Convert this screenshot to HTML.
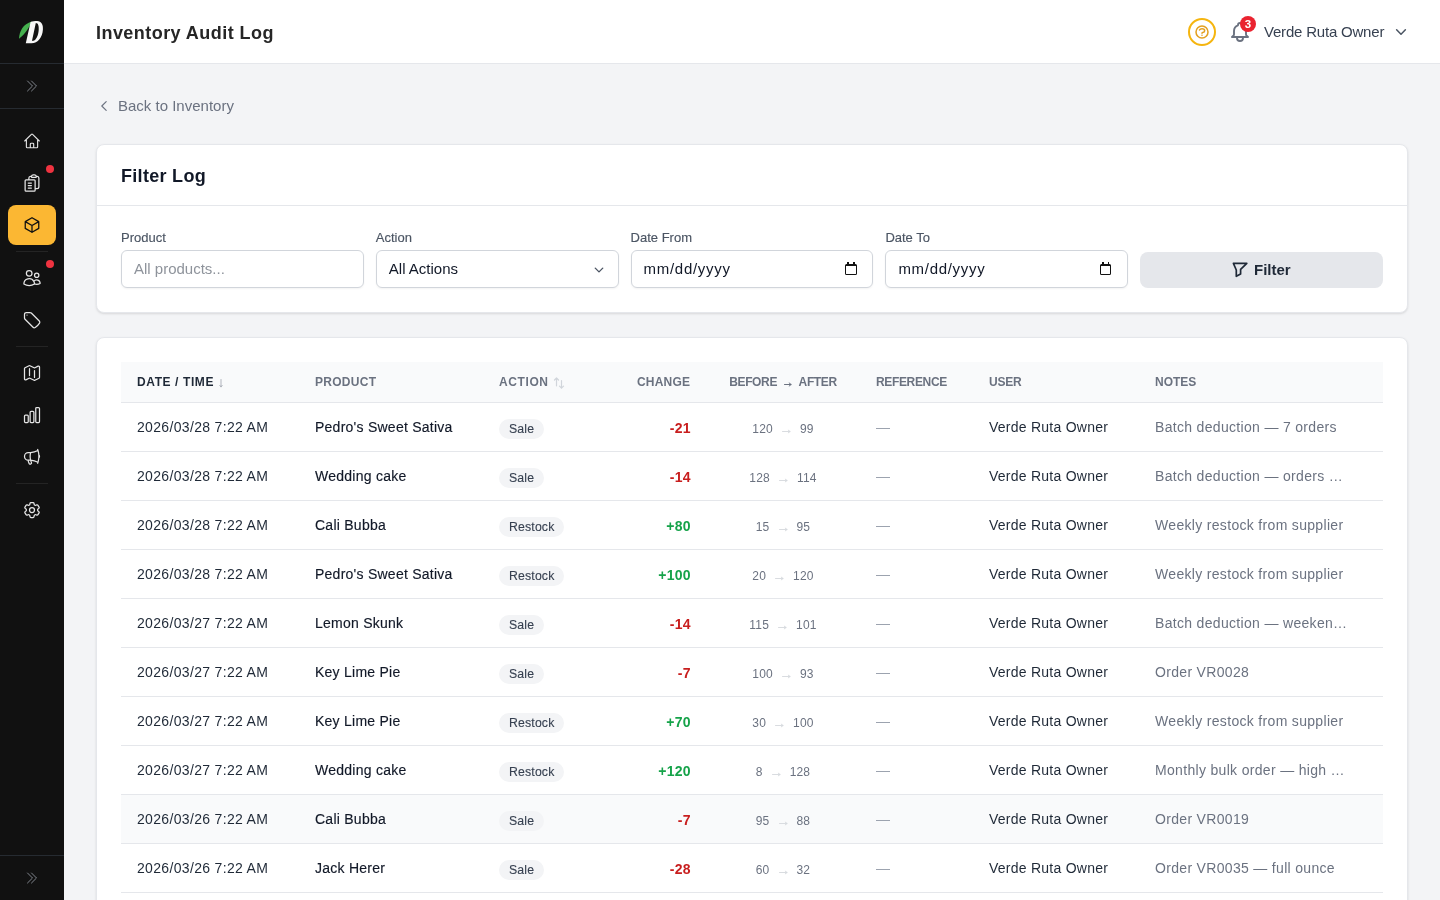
<!DOCTYPE html>
<html><head><meta charset="utf-8">
<style>
*{box-sizing:border-box;margin:0;padding:0}
html,body{width:1440px;height:900px;overflow:hidden;-webkit-font-smoothing:antialiased;background:#f3f4f6;font-family:"Liberation Sans",sans-serif;color:#111827}
.abs{position:absolute}
#side{position:absolute;left:0;top:0;width:64px;height:900px;background:#111111}
#side .dv{position:absolute;left:0;width:64px;height:1px;background:#262b31}
#side .sd{position:absolute;left:16px;width:32px;height:1px;background:#242424}
#side svg.ic{position:absolute;left:22px;width:20px;height:20px;fill:none;stroke:#e5e5e5;stroke-width:1.5;stroke-linecap:round;stroke-linejoin:round}
#side .dot{position:absolute;left:46px;width:8px;height:8px;border-radius:50%;background:#ef3340}
#active{position:absolute;left:8px;top:205px;width:48px;height:40px;border-radius:8px;background:#fbb733}
#hdr{position:absolute;left:64px;top:0;width:1376px;height:64px;background:#fff;border-bottom:1px solid #e5e7eb}
#hdr h1{position:absolute;left:32px;top:21px;font-size:18px;line-height:24px;font-weight:700;color:#262626;letter-spacing:0.45px}
.card{position:absolute;left:96px;width:1312px;background:#fff;border:1px solid #e5e7eb;border-radius:8px;box-shadow:0 1px 3px rgba(0,0,0,0.08),0 1px 2px rgba(0,0,0,0.05)}
.lbl{position:absolute;top:84px;font-size:13px;line-height:18px;color:#4b5563;-webkit-text-stroke:0.15px #4b5563}
.inp{position:absolute;top:105px;width:242.8px;height:38px;border:1px solid #d1d5db;border-radius:6px;box-shadow:0 1px 2px rgba(0,0,0,0.05);font-size:15px;line-height:20px;padding:8px 12px;background:#fff}
.cal{position:absolute;left:213.5px;top:13px;width:11.5px;height:10.5px;border:1.6px solid #111;border-top-width:2.6px;border-radius:1.5px}.cal:before,.cal:after{content:"";position:absolute;top:-4.5px;width:1.8px;height:2.5px;background:#111}.cal:before{left:1px}.cal:after{right:1px}
#tbl{position:absolute;left:24px;top:24px;width:1262px;height:600px}
.th{position:absolute;left:0;width:1262px}
.hc{position:absolute;top:12px;font-size:12px;line-height:16px;font-weight:700;color:#6b7280;letter-spacing:0.6px;white-space:nowrap}
.sa{font-size:10px;color:#9ca3af;margin-left:5px;font-weight:400}
.sb{font-size:10px;color:#d1d5db;margin-left:5px;font-weight:400;letter-spacing:-1px}
.arr{font-size:10px;font-weight:400;color:#9ca3af}
.tr{position:absolute;left:0;width:1262px;height:49px;border-bottom:1px solid #e5e7eb}
.td{position:absolute;top:14px;font-size:14px;line-height:20px;white-space:nowrap;letter-spacing:0.25px}
.dt{color:#1f2937;letter-spacing:0.33px}
.pn{color:#111827;-webkit-text-stroke:0.15px #111827}
.bd{position:absolute;top:16px;height:19.5px;padding:0 10px;border-radius:10px;background:#f3f4f6;font-size:12.3px;line-height:20.5px;color:#374151;letter-spacing:0.15px;-webkit-text-stroke:0.1px #374151}
.ch{font-weight:700;text-align:right;top:15px}
.ba{width:200px;text-align:center;font-size:12px;color:#6b7280;top:16px;letter-spacing:0.2px}
.rar{margin:0 9px;vertical-align:-0.5px}.har{margin:0 7px 0 6.5px;vertical-align:-1px}
.rf{color:#9ca3af}
.us{color:#1f2937}
.nt{color:#6b7280;letter-spacing:0.32px}
</style></head>
<body><div id="root" style="position:absolute;left:0;top:0;width:1440px;height:900px;will-change:transform">
<div id="side">
  <svg class="abs" style="left:0;top:0" width="64" height="64" viewBox="0 0 64 64">
    <path d="M19 38.8 C19.3 31 23 24 31.8 21.4 C29.5 27 25.5 33.5 19 38.8Z" fill="#45b04e"/>
    <path d="M25.8 43.2 L30.6 22 C32.5 21.3 34.5 21 37.2 21 C41.3 21 43.3 24.6 42.9 29.5 C42.4 37.5 38 43.2 31.5 43.2 Z M35.8 23.1 L32 40.8 C32.4 40.9 32.8 40.9 33.2 40.8 C36.2 40.3 38.3 35.5 38.7 30 C39 25.8 38.2 23.2 35.8 23.1 Z" fill="#f7f7f7" fill-rule="evenodd"/>
  </svg>
  <div class="dv" style="top:63px"></div>
  <svg class="abs" style="left:24px;top:78px" width="16" height="16" viewBox="0 0 24 24" fill="none" stroke="#80858d" stroke-width="1.5" stroke-linecap="round" stroke-linejoin="round"><path d="m5.25 4.5 7.5 7.5-7.5 7.5m6-15 7.5 7.5-7.5 7.5"/></svg>
  <div class="dv" style="top:108px"></div>

  <svg class="ic" style="top:132px;left:23px;width:18px;height:18px" viewBox="0 0 24 24"><path d="m2.25 12 8.954-8.955c.44-.439 1.152-.439 1.591 0L21.75 12M4.5 9.75v10.125c0 .621.504 1.125 1.125 1.125H9.75v-4.875c0-.621.504-1.125 1.125-1.125h2.25c.621 0 1.125.504 1.125 1.125V21h4.125c.621 0 1.125-.504 1.125-1.125V9.75M8.25 21h8.25"/></svg>
  <svg class="ic" style="top:173px" viewBox="0 0 24 24"><path d="M7.5 12h3.75M7.5 15h3.75M7.5 18h3.75M15.75 18.75H18a2.250 2.250 0 0 0 2.25-2.25V6.108c0-1.135-.845-2.098-1.976-2.192a48.424 48.424 0 0 0-1.123-.08m-5.801 0c-.065.21-.1.433-.1.664 0 .414.336.75.75.75h4.5a.75.75 0 0 0 .75-.75 2.25 2.25 0 0 0-.1-.664m-5.8 0A2.251 2.251 0 0 1 13.5 2.25H15c1.012 0 1.867.668 2.15 1.586m-5.8 0c-.376.023-.75.05-1.124.08C9.095 4.01 8.25 4.973 8.25 6.108V8.25m0 0H4.875c-.621 0-1.125.504-1.125 1.125v11.25c0 .621.504 1.125 1.125 1.125h9.75c.621 0 1.125-.504 1.125-1.125V9.375c0-.621-.504-1.125-1.125-1.125H8.25Z"/></svg>
  <div class="dot" style="top:165px"></div>

  <div id="active"></div>
  <svg class="ic" style="top:216px;left:23px;width:18px;height:18px;stroke:#111;stroke-width:1.7" viewBox="0 0 24 24"><path d="m21 7.5-9-5.25L3 7.5m18 0-9 5.25m9-5.25v9l-9 5.25M3 7.5l9 5.25M3 7.5v9l9 5.25m0-9v9"/></svg>
  <div class="sd" style="top:251px"></div>

  <svg class="ic" style="top:268px" viewBox="0 0 24 24"><path d="M15 19.128a9.38 9.38 0 0 0 2.625.372 9.337 9.337 0 0 0 4.121-.952 4.125 4.125 0 0 0-7.533-2.493M15 19.128v-.003c0-1.113-.285-2.16-.786-3.07M15 19.128v.106A12.318 12.318 0 0 1 8.624 21c-2.331 0-4.512-.645-6.374-1.766l-.001-.109a6.375 6.375 0 0 1 11.964-3.07M12 6.375a3.375 3.375 0 1 1-6.75 0 3.375 3.375 0 0 1 6.750 0Zm8.25 2.25a2.625 2.625 0 1 1-5.25 0 2.625 2.625 0 0 1 5.25 0Z"/></svg>
  <div class="dot" style="top:260px"></div>
  <svg class="ic" style="top:310px" viewBox="0 0 24 24"><path d="M9.568 3H5.25A2.25 2.25 0 0 0 3 5.25v4.318c0 .597.237 1.17.659 1.591l9.581 9.581c.699.699 1.78.872 2.607.33a18.095 18.095 0 0 0 5.223-5.223c.542-.827.369-1.908-.33-2.607L11.16 3.66A2.25 2.25 0 0 0 9.568 3Z"/><path d="M6 6h.008v.008H6V6Z"/></svg>
  <div class="sd" style="top:346px"></div>

  <svg class="ic" style="top:363px" viewBox="0 0 24 24"><path d="M9 6.75V15m6-6v8.25m.503 3.498 4.875-2.437c.381-.19.622-.58.622-1.006V4.82c0-.836-.88-1.38-1.628-1.006l-3.869 1.934c-.317.159-.69.159-1.006 0L9.503 3.252a1.125 1.125 0 0 0-1.006 0L3.622 5.689C3.24 5.88 3 6.27 3 6.695V19.18c0 .836.88 1.38 1.628 1.006l3.869-1.934c.317-.159.69-.159 1.006 0l4.994 2.497c.317.158.69.158 1.006 0Z"/></svg>
  <svg class="ic" style="top:405px" viewBox="0 0 24 24"><path d="M3 13.125C3 12.504 3.504 12 4.125 12h2.25c.621 0 1.125.504 1.125 1.125v6.75C7.5 20.496 6.996 21 6.375 21h-2.25A1.125 1.125 0 0 1 3 19.875v-6.75ZM9.75 8.625c0-.621.504-1.125 1.125-1.125h2.25c.621 0 1.125.504 1.125 1.125v11.25c0 .621-.504 1.125-1.125 1.125h-2.25a1.125 1.125 0 0 1-1.125-1.125V8.625ZM16.5 4.125c0-.621.504-1.125 1.125-1.125h2.25C20.496 3 21 3.504 21 4.125v15.75c0 .621-.504 1.125-1.125 1.125h-2.25a1.125 1.125 0 0 1-1.125-1.125V4.125Z"/></svg>
  <svg class="ic" style="top:447px" viewBox="0 0 24 24"><path d="M10.34 15.84c-.688-.06-1.386-.09-2.09-.09H7.5a4.5 4.5 0 1 1 0-9h.75c.704 0 1.402-.03 2.090-.09m0 9.180c.253.962.584 1.892.985 2.783.247.55.06 1.21-.463 1.511l-.657.38c-.551.318-1.26.117-1.527-.461a20.845 20.845 0 0 1-1.44-4.282m3.102.069a18.03 18.03 0 0 1-.59-4.59c0-1.586.205-3.124.59-4.59m0 9.18a23.848 23.848 0 0 1 8.835 2.535M10.34 6.66a23.847 23.847 0 0 0 8.835-2.535m0 0A23.74 23.74 0 0 0 18.795 3m.38 1.125a23.91 23.91 0 0 1 1.014 5.395m-1.014 8.855c-.118.38-.245.754-.38 1.125m.38-1.125a23.910 23.910 0 0 0 1.014-5.395m0-3.46c.495.413.811 1.035.811 1.73 0 .695-.316 1.317-.811 1.73m0-3.46a24.347 24.347 0 0 1 0 3.46"/></svg>
  <div class="sd" style="top:483px"></div>

  <svg class="ic" style="top:500px" viewBox="0 0 24 24"><path d="M9.594 3.94c.09-.542.56-.94 1.11-.94h2.593c.55 0 1.02.398 1.11.94l.213 1.281c.063.374.313.686.645.87.074.04.147.083.22.127.325.196.72.257 1.075.124l1.217-.456a1.125 1.125 0 0 1 1.37.49l1.296 2.247a1.125 1.125 0 0 1-.26 1.431l-1.003.827c-.293.241-.438.613-.43.992a7.723 7.723 0 0 1 0 .255c-.008.378.137.75.43.991l1.004.827c.424.35.534.955.26 1.43l-1.298 2.247a1.125 1.125 0 0 1-1.369.491l-1.217-.456c-.355-.133-.75-.072-1.076.124a6.47 6.47 0 0 1-.22.128c-.331.183-.581.495-.644.869l-.213 1.281c-.09.543-.56.94-1.11.94h-2.594c-.55 0-1.019-.398-1.11-.94l-.213-1.281c-.062-.374-.312-.686-.644-.87a6.52 6.52 0 0 1-.22-.127c-.325-.196-.72-.257-1.076-.124l-1.217.456a1.125 1.125 0 0 1-1.369-.49l-1.297-2.247a1.125 1.125 0 0 1 .26-1.431l1.004-.827c.292-.24.437-.613.43-.991a6.932 6.932 0 0 1 0-.255c.007-.38-.138-.751-.43-.992l-1.004-.827a1.125 1.125 0 0 1-.26-1.43l1.297-2.247a1.125 1.125 0 0 1 1.37-.491l1.216.456c.356.133.751.072 1.076-.124.072-.044.146-.086.22-.128.332-.183.582-.495.644-.869l.214-1.28Z"/><path d="M15 12a3 3 0 1 1-6 0 3 3 0 0 1 6 0Z"/></svg>

  <div class="dv" style="top:855px"></div>
  <svg class="abs" style="left:24px;top:870px" width="16" height="16" viewBox="0 0 24 24" fill="none" stroke="#80858d" stroke-width="1.5" stroke-linecap="round" stroke-linejoin="round"><path d="m5.25 4.5 7.5 7.5-7.5 7.5m6-15 7.5 7.5-7.5 7.5"/></svg>
</div>
<div id="hdr">
  <h1>Inventory Audit Log</h1>
  <div class="abs" style="left:1124px;top:18px;width:28px;height:28px;border-radius:50%;border:2px solid #f5b50f"></div>
  <svg class="abs" style="left:1130px;top:24px" width="16" height="16" viewBox="0 0 24 24" fill="none" stroke="#e3a020" stroke-width="2.3" stroke-linecap="round" stroke-linejoin="round"><path d="M8.228 9c.549-1.165 2.03-2 3.772-2 2.21 0 4 1.343 4 3 0 1.4-1.278 2.575-3.006 2.907-.542.104-.994.54-.994 1.093m0 3h.01M21 12a9 9 0 11-18 0 9 9 0 0118 0z"/></svg>
  <svg class="abs" style="left:1164px;top:20px" width="24" height="24" viewBox="0 0 24 24" fill="none" stroke="#6b7280" stroke-width="1.9" stroke-linecap="round" stroke-linejoin="round"><path d="M15 17h5l-1.405-1.405A2.032 2.032 0 0118 14.158V11a6.002 6.002 0 00-4-5.659V5a2 2 0 10-4 0v.341C7.67 6.165 6 8.388 6 11v3.159c0 .538-.214 1.055-.595 1.436L4 17h5m6 0v1a3 3 0 11-6 0v-1m6 0H9"/></svg>
  <div class="abs" style="left:1176px;top:16px;width:16px;height:16px;border-radius:50%;background:#ea2330;color:#fff;font-size:11.5px;font-weight:700;line-height:16px;text-align:center">3</div>
  <div class="abs" style="left:1200px;top:22px;font-size:15px;line-height:20px;color:#374151;letter-spacing:-0.2px">Verde Ruta Owner</div>
  <svg class="abs" style="left:1330px;top:25px" width="14" height="14" viewBox="0 0 24 24" fill="none" stroke="#4b5563" stroke-width="2.6" stroke-linecap="round" stroke-linejoin="round"><path d="m19.5 8.25-7.5 7.5-7.5-7.5"/></svg>
</div>

<svg class="abs" style="left:97px;top:99px" width="14" height="14" viewBox="0 0 24 24" fill="none" stroke="#6b7280" stroke-width="2" stroke-linecap="round" stroke-linejoin="round"><path d="M15.75 19.5 8.25 12l7.5-7.5"/></svg>
<div class="abs" style="left:118px;top:96px;font-size:15px;line-height:20px;color:#6b7280">Back to Inventory</div>

<div class="card" style="top:144px;height:169px">
  <div class="abs" style="left:24px;top:19px;font-size:18px;line-height:24px;font-weight:700;color:#111827;letter-spacing:0.3px">Filter Log</div>
  <div class="abs" style="left:0;top:60px;width:1310px;height:1px;background:#e5e7eb"></div>
  <div class="lbl" style="left:24px">Product</div>
  <div class="inp" style="left:24px"><span style="color:#8e939b">All products...</span></div>
  <div class="lbl" style="left:278.8px">Action</div>
  <div class="inp" style="left:278.8px"><span style="color:#111827">All Actions</span>
    <svg class="abs" style="left:216px;top:13px" width="12" height="12" viewBox="0 0 24 24" fill="none" stroke="#4b5563" stroke-width="2.8" stroke-linecap="round" stroke-linejoin="round"><path d="m19.5 8.25-7.5 7.5-7.5-7.5"/></svg></div>
  <div class="lbl" style="left:533.6px">Date From</div>
  <div class="inp" style="left:533.6px"><span style="color:#111827;letter-spacing:0.7px">mm/dd/yyyy</span><div class="cal"></div></div>
  <div class="lbl" style="left:788.4px">Date To</div>
  <div class="inp" style="left:788.4px"><span style="color:#111827;letter-spacing:0.7px">mm/dd/yyyy</span><div class="cal"></div></div>
  <div class="abs" style="left:1043.2px;top:107px;width:242.8px;height:36px;border-radius:8px;background:#e5e7eb"></div>
  <svg class="abs" style="left:1134px;top:116px" width="18" height="18" viewBox="0 0 18 18" fill="none" stroke="#1f2937" stroke-width="1.7" stroke-linecap="round" stroke-linejoin="round"><path d="M2.4 2.4H15.8L9.6 8.4V13L5.3 15.3V9Z"/></svg>
  <div class="abs" style="left:1157px;top:115px;font-size:15px;line-height:20px;font-weight:700;color:#1f2937">Filter</div>
</div>

<div class="card" style="top:337px;height:600px">
  <!--TBL--><div id="tbl">
<div class="th" style="top:0;height:41px;background:#f9fafb;border-bottom:1px solid #e5e7eb"></div>
<div class="hc" style="left:16px;color:#1f2937">DATE / TIME</div>
<div class="hc" style="left:194px;letter-spacing:0.28px;">PRODUCT</div>
<div class="hc" style="left:378px;">ACTION</div>
<div class="hc" style="left:0;width:569.2px;text-align:right;letter-spacing:0.2px">CHANGE</div>
<div class="hc" style="left:662px;width:200px;margin-left:-100px;text-align:center;letter-spacing:-0.35px">BEFORE<svg class="har" width="8" height="5" viewBox="0 0 8 5"><path d="M0.5 2.5H7M5.2 1 7.2 2.5 5.2 4" fill="none" stroke="#6b7280" stroke-width="1" stroke-linecap="round" stroke-linejoin="round"/></svg>AFTER</div>
<div class="hc" style="left:755px;letter-spacing:-0.35px;">REFERENCE</div>
<div class="hc" style="left:868px;letter-spacing:-0.2px;">USER</div>
<div class="hc" style="left:1034px;letter-spacing:0px;">NOTES</div>
<svg class="abs" style="left:97px;top:16px" width="6" height="10" viewBox="0 0 6 10"><path d="M3 1.5V8.8M1.8 7.4 3 9 4.2 7.4" fill="none" stroke="#a8adb5" stroke-width="0.9" stroke-linecap="round" stroke-linejoin="round"/></svg>
<svg class="abs" style="left:432px;top:15px" width="12" height="12" viewBox="0 0 12 12"><path d="M3.5 1V8.8M1.5 3 3.5 1 5.5 3M8.5 3.5V11.2M6.5 9.2 8.5 11.2 10.5 9.2" fill="none" stroke="#d1d5db" stroke-width="1.2" stroke-linecap="round" stroke-linejoin="round"/></svg>
<div class="tr" style="top:41px;">
<div class="td dt" style="left:16px">2026/03/28 7:22 AM</div>
<div class="td pn" style="left:194px">Pedro's Sweet Sativa</div>
<div class="bd" style="left:378px">Sale</div>
<div class="td ch" style="left:0;width:569.8px;color:#c81e1e">-21</div>
<div class="td ba" style="left:562px">120<svg class="rar" width="9" height="5" viewBox="0 0 9 5"><path d="M0.5 2.5H8M6.3 1.2 8.2 2.5 6.3 3.8" fill="none" stroke="#d5d8dd" stroke-width="0.9" stroke-linecap="round" stroke-linejoin="round"/></svg>99</div>
<div class="td rf" style="left:755px">—</div>
<div class="td us" style="left:868px">Verde Ruta Owner</div>
<div class="td nt" style="left:1034px">Batch deduction — 7 orders</div>
</div>
<div class="tr" style="top:90px;">
<div class="td dt" style="left:16px">2026/03/28 7:22 AM</div>
<div class="td pn" style="left:194px">Wedding cake</div>
<div class="bd" style="left:378px">Sale</div>
<div class="td ch" style="left:0;width:569.8px;color:#c81e1e">-14</div>
<div class="td ba" style="left:562px">128<svg class="rar" width="9" height="5" viewBox="0 0 9 5"><path d="M0.5 2.5H8M6.3 1.2 8.2 2.5 6.3 3.8" fill="none" stroke="#d5d8dd" stroke-width="0.9" stroke-linecap="round" stroke-linejoin="round"/></svg>114</div>
<div class="td rf" style="left:755px">—</div>
<div class="td us" style="left:868px">Verde Ruta Owner</div>
<div class="td nt" style="left:1034px">Batch deduction — orders …</div>
</div>
<div class="tr" style="top:139px;">
<div class="td dt" style="left:16px">2026/03/28 7:22 AM</div>
<div class="td pn" style="left:194px">Cali Bubba</div>
<div class="bd" style="left:378px">Restock</div>
<div class="td ch" style="left:0;width:569.8px;color:#16a34a">+80</div>
<div class="td ba" style="left:562px">15<svg class="rar" width="9" height="5" viewBox="0 0 9 5"><path d="M0.5 2.5H8M6.3 1.2 8.2 2.5 6.3 3.8" fill="none" stroke="#d5d8dd" stroke-width="0.9" stroke-linecap="round" stroke-linejoin="round"/></svg>95</div>
<div class="td rf" style="left:755px">—</div>
<div class="td us" style="left:868px">Verde Ruta Owner</div>
<div class="td nt" style="left:1034px">Weekly restock from supplier</div>
</div>
<div class="tr" style="top:188px;">
<div class="td dt" style="left:16px">2026/03/28 7:22 AM</div>
<div class="td pn" style="left:194px">Pedro's Sweet Sativa</div>
<div class="bd" style="left:378px">Restock</div>
<div class="td ch" style="left:0;width:569.8px;color:#16a34a">+100</div>
<div class="td ba" style="left:562px">20<svg class="rar" width="9" height="5" viewBox="0 0 9 5"><path d="M0.5 2.5H8M6.3 1.2 8.2 2.5 6.3 3.8" fill="none" stroke="#d5d8dd" stroke-width="0.9" stroke-linecap="round" stroke-linejoin="round"/></svg>120</div>
<div class="td rf" style="left:755px">—</div>
<div class="td us" style="left:868px">Verde Ruta Owner</div>
<div class="td nt" style="left:1034px">Weekly restock from supplier</div>
</div>
<div class="tr" style="top:237px;">
<div class="td dt" style="left:16px">2026/03/27 7:22 AM</div>
<div class="td pn" style="left:194px">Lemon Skunk</div>
<div class="bd" style="left:378px">Sale</div>
<div class="td ch" style="left:0;width:569.8px;color:#c81e1e">-14</div>
<div class="td ba" style="left:562px">115<svg class="rar" width="9" height="5" viewBox="0 0 9 5"><path d="M0.5 2.5H8M6.3 1.2 8.2 2.5 6.3 3.8" fill="none" stroke="#d5d8dd" stroke-width="0.9" stroke-linecap="round" stroke-linejoin="round"/></svg>101</div>
<div class="td rf" style="left:755px">—</div>
<div class="td us" style="left:868px">Verde Ruta Owner</div>
<div class="td nt" style="left:1034px">Batch deduction — weeken…</div>
</div>
<div class="tr" style="top:286px;">
<div class="td dt" style="left:16px">2026/03/27 7:22 AM</div>
<div class="td pn" style="left:194px">Key Lime Pie</div>
<div class="bd" style="left:378px">Sale</div>
<div class="td ch" style="left:0;width:569.8px;color:#c81e1e">-7</div>
<div class="td ba" style="left:562px">100<svg class="rar" width="9" height="5" viewBox="0 0 9 5"><path d="M0.5 2.5H8M6.3 1.2 8.2 2.5 6.3 3.8" fill="none" stroke="#d5d8dd" stroke-width="0.9" stroke-linecap="round" stroke-linejoin="round"/></svg>93</div>
<div class="td rf" style="left:755px">—</div>
<div class="td us" style="left:868px">Verde Ruta Owner</div>
<div class="td nt" style="left:1034px">Order VR0028</div>
</div>
<div class="tr" style="top:335px;">
<div class="td dt" style="left:16px">2026/03/27 7:22 AM</div>
<div class="td pn" style="left:194px">Key Lime Pie</div>
<div class="bd" style="left:378px">Restock</div>
<div class="td ch" style="left:0;width:569.8px;color:#16a34a">+70</div>
<div class="td ba" style="left:562px">30<svg class="rar" width="9" height="5" viewBox="0 0 9 5"><path d="M0.5 2.5H8M6.3 1.2 8.2 2.5 6.3 3.8" fill="none" stroke="#d5d8dd" stroke-width="0.9" stroke-linecap="round" stroke-linejoin="round"/></svg>100</div>
<div class="td rf" style="left:755px">—</div>
<div class="td us" style="left:868px">Verde Ruta Owner</div>
<div class="td nt" style="left:1034px">Weekly restock from supplier</div>
</div>
<div class="tr" style="top:384px;">
<div class="td dt" style="left:16px">2026/03/27 7:22 AM</div>
<div class="td pn" style="left:194px">Wedding cake</div>
<div class="bd" style="left:378px">Restock</div>
<div class="td ch" style="left:0;width:569.8px;color:#16a34a">+120</div>
<div class="td ba" style="left:562px">8<svg class="rar" width="9" height="5" viewBox="0 0 9 5"><path d="M0.5 2.5H8M6.3 1.2 8.2 2.5 6.3 3.8" fill="none" stroke="#d5d8dd" stroke-width="0.9" stroke-linecap="round" stroke-linejoin="round"/></svg>128</div>
<div class="td rf" style="left:755px">—</div>
<div class="td us" style="left:868px">Verde Ruta Owner</div>
<div class="td nt" style="left:1034px">Monthly bulk order — high …</div>
</div>
<div class="tr" style="top:433px;background:#f9fafb;">
<div class="td dt" style="left:16px">2026/03/26 7:22 AM</div>
<div class="td pn" style="left:194px">Cali Bubba</div>
<div class="bd" style="left:378px">Sale</div>
<div class="td ch" style="left:0;width:569.8px;color:#c81e1e">-7</div>
<div class="td ba" style="left:562px">95<svg class="rar" width="9" height="5" viewBox="0 0 9 5"><path d="M0.5 2.5H8M6.3 1.2 8.2 2.5 6.3 3.8" fill="none" stroke="#d5d8dd" stroke-width="0.9" stroke-linecap="round" stroke-linejoin="round"/></svg>88</div>
<div class="td rf" style="left:755px">—</div>
<div class="td us" style="left:868px">Verde Ruta Owner</div>
<div class="td nt" style="left:1034px">Order VR0019</div>
</div>
<div class="tr" style="top:482px;">
<div class="td dt" style="left:16px">2026/03/26 7:22 AM</div>
<div class="td pn" style="left:194px">Jack Herer</div>
<div class="bd" style="left:378px">Sale</div>
<div class="td ch" style="left:0;width:569.8px;color:#c81e1e">-28</div>
<div class="td ba" style="left:562px">60<svg class="rar" width="9" height="5" viewBox="0 0 9 5"><path d="M0.5 2.5H8M6.3 1.2 8.2 2.5 6.3 3.8" fill="none" stroke="#d5d8dd" stroke-width="0.9" stroke-linecap="round" stroke-linejoin="round"/></svg>32</div>
<div class="td rf" style="left:755px">—</div>
<div class="td us" style="left:868px">Verde Ruta Owner</div>
<div class="td nt" style="left:1034px">Order VR0035 — full ounce</div>
</div>
</div><!--/TBL-->
</div>
</div></body></html>
